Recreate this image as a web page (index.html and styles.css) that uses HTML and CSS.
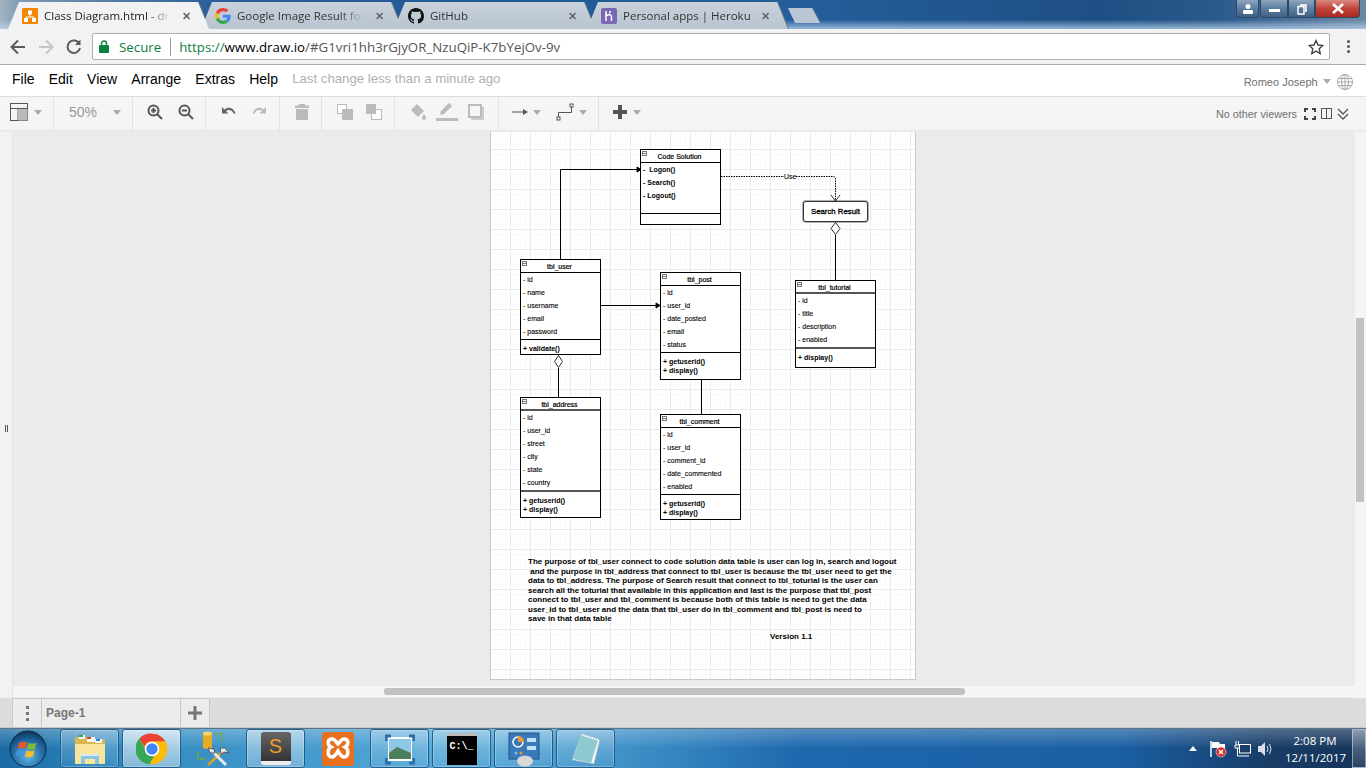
FILE: index.html
```html
<!DOCTYPE html>
<html lang="en">
<head>
    <meta charset="UTF-8">
    <title>Class Diagram.html - draw.io</title>
    <link rel="stylesheet" href="styles.css">
</head>
<body>
    <div class="titlebar">
        <div class="tabs">
            <div class="tab active">
                <svg class="favicon" viewBox="0 0 16 16"><rect width="16" height="16" rx="1" fill="#f08705"/><path d="M8 6v3M8 9H4v2M8 9h4v2" stroke="#fff" fill="none"/><rect x="6" y="2.500" width="4" height="4" fill="#fff"/><rect x="2" y="10" width="4" height="4" fill="#fff"/><rect x="10" y="10" width="4" height="4" fill="#fff"/></svg>
                <span class="tab-title fade">Class Diagram.html - dra</span>
                <span class="tab-close">✕</span>
            </div>
            <div class="tab">
                <svg class="favicon" viewBox="0 0 48 48"><path fill="#ea4335" d="M24 9.500c3.500 0 6.700 1.300 9.100 3.500l6.800-6.800C35.800 2.400 30.300 0 24 0 14.600 0 6.500 5.400 2.600 13.200l7.900 6.200C12.400 13.700 17.700 9.500 24 9.500z"/><path fill="#4285f4" d="M46.900 24.500c0-1.600-.1-3.100-.4-4.500H24v9h12.900c-.6 3-2.200 5.500-4.700 7.200l7.700 6c4.500-4.200 7-10.300 7-17.700z"/><path fill="#fbbc05" d="M10.500 28.600c-.5-1.400-.8-3-.8-4.600s.3-3.200.8-4.600l-7.900-6.200C.9 16.500 0 20.100 0 24s.9 7.500 2.600 10.800l7.900-6.200z"/><path fill="#34a853" d="M24 48c6.500 0 11.900-2.100 15.900-5.800l-7.700-6c-2.200 1.500-4.900 2.300-8.200 2.300-6.300 0-11.600-4.200-13.500-9.900l-7.900 6.200C6.500 42.600 14.600 48 24 48z"/></svg>
                <span class="tab-title fade">Google Image Result for</span>
                <span class="tab-close">✕</span>
            </div>
            <div class="tab">
                <svg class="favicon" viewBox="0 0 16 16"><path fill="#111" d="M8 0C3.580 0 0 3.580 0 8c0 3.540 2.290 6.530 5.470 7.590.4.070.55-.17.55-.38 0-.19-.01-.82-.01-1.490-2.010.37-2.530-.49-2.690-.94-.09-.23-.48-.94-.82-1.130-.28-.15-.68-.52-.01-.53.63-.01 1.080.58 1.230.82.72 1.210 1.870.87 2.330.66.070-.52.28-.87.51-1.070-1.780-.2-3.640-.89-3.640-3.950 0-.87.31-1.590.82-2.150-.08-.2-.36-1.020.08-2.120 0 0 .67-.21 2.200.82.64-.18 1.320-.27 2-.27.68 0 1.360.09 2 .27 1.530-1.040 2.200-.82 2.200-.82.44 1.100.16 1.920.08 2.120.51.56.82 1.270.82 2.150 0 3.070-1.870 3.750-3.650 3.950.29.25.54.73.54 1.480 0 1.070-.01 1.930-.01 2.200 0 .21.15.46.55.38A8.013 8.013 0 0016 8c0-4.420-3.580-8-8-8z"/></svg>
                <span class="tab-title">GitHub</span>
                <span class="tab-close">✕</span>
            </div>
            <div class="tab">
                <svg class="favicon" viewBox="0 0 16 16"><rect width="16" height="16" rx="2" fill="#7b68b3"/><path d="M5 3v10M5 7.500c3-1 5.500-1 5.500 1V13M9.500 3l-1 2.500M5.500 13" stroke="#fff" stroke-width="1.500" fill="none"/></svg>
                <span class="tab-title">Personal apps | Heroku</span>
                <span class="tab-close">✕</span>
            </div>
            <div class="newtab"></div>
        </div>
        <div class="winbtns">
            <span class="winbtn user"><svg width="12" height="12" viewBox="0 0 12 12"><circle cx="6" cy="3.500" r="2.500" fill="#fff"/><rect x="1" y="7" width="10" height="4" rx="1" fill="#fff"/></svg></span>
            <span class="winbtn min"><i class="min-bar"></i></span>
            <span class="winbtn max"><svg width="12" height="12" viewBox="0 0 12 12" fill="none" stroke="#fff" stroke-width="1.500"><rect x="2" y="3.500" width="6" height="7.500"/><path d="M4 2h6v7"/></svg></span>
            <span class="winbtn close"><svg width="14" height="11" viewBox="0 0 14 11" stroke="#fff" stroke-width="2.600"><path d="M2 1l10 9M12 1L2 10"/></svg></span>
        </div>
    </div>

    <div class="addressbar">
        <svg class="nav" width="18" height="18" viewBox="0 0 18 18" fill="none" stroke="#5a5a5a" stroke-width="2"><path d="M16 9H3M9 2.500L2.500 9 9 15.500"/></svg>
        <svg class="nav" width="18" height="18" viewBox="0 0 18 18" fill="none" stroke="#c4c4c4" stroke-width="2"><path d="M2 9h13M9 2.500L15.500 9 9 15.500"/></svg>
        <svg class="nav" width="18" height="18" viewBox="0 0 18 18" fill="none" stroke="#5a5a5a" stroke-width="2"><path d="M14.500 6A6.300 6.300 0 1 0 15 10"/><path d="M15.500 1.500V7h-5.500z" fill="#5a5a5a" stroke="none"/></svg>
        <div class="omnibox">
            <svg width="10" height="13" viewBox="0 0 10 13"><rect y="5" width="10" height="8" rx="1" fill="#0b8043"/><path d="M2.500 6V3.500a2.500 2.500 0 0 1 5 0V6" fill="none" stroke="#0b8043" stroke-width="1.400"/></svg>
            <span class="secure">Secure</span>
            <span class="url"><span class="url-green">https://</span><span class="url-host">www.draw.io</span>/#G1vri1hh3rGjyOR_NzuQiP-K7bYejOv-9v</span>
            <svg class="star" width="16" height="16" viewBox="0 0 16 16" fill="none" stroke="#444" stroke-width="1.400"><path d="M8 1.500l2 4.500 4.800.5-3.600 3.200 1 4.800L8 12.100l-4.200 2.400 1-4.800L1.200 6.500 6 6z"/></svg>
        </div>
        <div class="kebab"><i></i><i></i><i></i></div>
    </div>

    <div class="menubar">
        <span>File</span><span>Edit</span><span>View</span><span>Arrange</span><span>Extras</span><span>Help</span>
        <span class="status">Last change less than a minute ago</span>
        <span class="account">Romeo Joseph</span>
        <i class="caret account-caret"></i>
        <svg class="globe" width="18" height="18" viewBox="0 0 18 18" fill="none" stroke="#aaa"><circle cx="9" cy="9" r="7.500"/><ellipse cx="9" cy="9" rx="3.500" ry="7.500"/><path d="M9 1.500v15M1.500 9h15M2.500 5.500h13M2.500 12.500h13"/></svg>
    </div>

    <div class="toolbar">
        <div class="group g1">
            <svg width="18" height="18" viewBox="0 0 18 18" fill="none" stroke="#555"><rect x=".5" y=".5" width="17" height="17"/><path d="M.5 5.500h17M8 5.500v12"/><rect x="8" y="6" width="9.500" height="11.500" fill="#bbb" stroke="none"/></svg>
            <i class="caret"></i>
        </div>
        <div class="group g2"><span class="zoom-level">50%</span><i class="caret"></i></div>
        <div class="group g3">
            <svg width="18" height="18" viewBox="0 0 18 18" fill="none" stroke="#555" stroke-width="2"><circle cx="7.500" cy="7.500" r="5"/><path d="M11 11l5 5M5 7.500h5M7.500 5v5"/></svg>
            <svg width="18" height="18" viewBox="0 0 18 18" fill="none" stroke="#555" stroke-width="2"><circle cx="7.500" cy="7.500" r="5"/><path d="M11 11l5 5M5 7.500h5"/></svg>
        </div>
        <div class="group g4">
            <svg width="18" height="18" viewBox="0 0 18 18" fill="#666"><path d="M2 4v6.500h6.500L6 8c3-2 6-1 8 3l1.500-.7C13 4.500 8.500 3.500 4.500 6.500z"/></svg>
            <svg width="18" height="18" viewBox="0 0 18 18" fill="#bbb"><path d="M16 4v6.500H9.500L12 8c-3-2-6-1-8 3l-1.500-.7C5 4.500 9.500 3.500 13.500 6.500z"/></svg>
        </div>
        <div class="group g5">
            <svg width="18" height="18" viewBox="0 0 18 18" fill="#bbb"><path d="M6 1h6v1.500h4V5H2V2.500h4zM3 6h12v11H3z"/></svg>
        </div>
        <div class="group g6">
            <svg width="18" height="18" viewBox="0 0 18 18" fill="#fff" stroke="#bbb"><rect x="1.500" y="1.500" width="9" height="9"/><rect x="6.500" y="6.500" width="10" height="10" fill="#bbb"/></svg>
            <svg width="18" height="18" viewBox="0 0 18 18" fill="#fff" stroke="#bbb"><rect x="6.500" y="6.500" width="10" height="10"/><rect x="1.500" y="1.500" width="9" height="9" fill="#bbb"/></svg>
        </div>
        <div class="group g7">
            <svg width="18" height="18" viewBox="0 0 18 18" fill="#bbb"><path d="M8 1l7 7-6 6-7-7zM15 11c1.500 2 2 3 2 4a2 2 0 0 1-4 0c0-1 .5-2 2-4z"/></svg>
            <svg width="22" height="20" viewBox="0 0 22 20" fill="#bbb"><path d="M13 1l3 3-8 8-4 1 1-4zM0 16h22v3H0z"/></svg>
            <svg width="18" height="18" viewBox="0 0 18 18" fill="none"><path d="M4 4h13v13H4z" fill="#ccc"/><rect x="2" y="2" width="12" height="12" fill="#f5f5f5" stroke="#bbb" stroke-width="2"/></svg>
        </div>
        <div class="group g8">
            <svg width="16" height="10" viewBox="0 0 16 10" fill="#555"><path d="M0 4.500h12v1H0zM11 2l5 3-5 3z"/></svg>
            <i class="caret"></i>
            <svg class="waypoint" width="18" height="18" viewBox="0 0 18 18" fill="none" stroke="#555"><path d="M2.500 15V9.500h13V3"/><rect x="1" y="14" width="3" height="3" fill="#fff"/><rect x="14" y="1" width="3" height="3" fill="#fff"/></svg>
            <i class="caret"></i>
        </div>
        <div class="group g9">
            <svg width="14" height="14" viewBox="0 0 14 14" fill="#555"><path d="M5 0h4v5h5v4H9v5H5V9H0V5h5z"/></svg>
            <i class="caret"></i>
        </div>
        <div class="viewers">
            <span>No other viewers</span>
            <svg width="12" height="12" viewBox="0 0 12 12" fill="#444"><path d="M0 0h4v2H2v2H0zM8 0h4v4h-2V2H8zM12 8v4H8v-2h2V8zM4 12H0V8h2v2h2z"/></svg>
            <svg width="11" height="11" viewBox="0 0 11 11" fill="none" stroke="#555"><rect x=".5" y=".5" width="10" height="10"/><path d="M5.500 .5v10"/></svg>
            <svg width="12" height="12" viewBox="0 0 12 12" fill="none" stroke="#555" stroke-width="1.300"><path d="M1 1l5 5 5-5M1 6l5 5 5-5"/></svg>
        </div>
    </div>

    <div class="workspace">
        <div class="sidebar"><div class="grip"><i></i><i></i></div></div>
        <div class="page">
            <svg class="wires" width="424" height="549" viewBox="0 0 424 549" fill="none" stroke="#000">
                <path d="M69.500 129V39.500H146"/>
                <path d="M146 37l4 2.500-4 2.500z" fill="#000"/>
                <path d="M110 175.500h56"/>
                <path d="M165 173l4 2.500-4 2.500z" fill="#000"/>
                <path d="M230 46.500h112q2.500 0 2.500 2.500v21.500" stroke-dasharray="1.500 1"/>
                <path d="M340 65l4.500 6 4.500-6" stroke="#333"/>
                <path d="M344.500 105v45"/>
                <path d="M344.500 92.500l4.500 6-4.500 6-4.500-6z" fill="#fff" stroke="#333"/>
                <path d="M67.500 238v29"/>
                <path d="M67.500 225.500l4 6-4 6-4-6z" fill="#fff" stroke="#333"/>
                <path d="M210.500 250v34"/>
            </svg>

            <span class="edge-label">Use</span>

            <div class="node code-solution">
                <div class="node-head"><i class="toggle"></i>Code Solution</div>
                <div class="rows tall">
                    <div class="row">-&nbsp; Logon()</div>
                    <div class="row">- Search()</div>
                    <div class="row">- Logout()</div>
                </div>
                <div class="methods empty"></div>
            </div>

            <div class="search-result">Search Result</div>

            <div class="node tbl-user">
                <div class="node-head"><i class="toggle"></i>tbl_user</div>
                <div class="rows">
                    <div class="row">- id</div>
                    <div class="row">- name</div>
                    <div class="row">- username</div>
                    <div class="row">- email</div>
                    <div class="row">- password</div>
                </div>
                <div class="methods"><div>+ validate()</div></div>
            </div>

            <div class="node tbl-post">
                <div class="node-head"><i class="toggle"></i>tbl_post</div>
                <div class="rows">
                    <div class="row">- id</div>
                    <div class="row">- user_id</div>
                    <div class="row">- date_posted</div>
                    <div class="row">- email</div>
                    <div class="row">- status</div>
                </div>
                <div class="methods"><div>+ getuserid()</div><div>+ display()</div></div>
            </div>

            <div class="node tbl-tutorial">
                <div class="node-head"><i class="toggle"></i>tbl_tutorial</div>
                <div class="rows">
                    <div class="row">- id</div>
                    <div class="row">- title</div>
                    <div class="row">- description</div>
                    <div class="row">- enabled</div>
                </div>
                <div class="methods"><div>+ display()</div></div>
            </div>

            <div class="node tbl-address">
                <div class="node-head"><i class="toggle"></i>tbl_address</div>
                <div class="rows">
                    <div class="row">- id</div>
                    <div class="row">- user_id</div>
                    <div class="row">- street</div>
                    <div class="row">- city</div>
                    <div class="row">- state</div>
                    <div class="row">- country</div>
                </div>
                <div class="methods"><div>+ getuserid()</div><div>+ display()</div></div>
            </div>

            <div class="node tbl-comment">
                <div class="node-head"><i class="toggle"></i>tbl_comment</div>
                <div class="rows">
                    <div class="row">- id</div>
                    <div class="row">- user_id</div>
                    <div class="row">- comment_id</div>
                    <div class="row">- date_commented</div>
                    <div class="row">- enabled</div>
                </div>
                <div class="methods"><div>+ getuserid()</div><div>+ display()</div></div>
            </div>

            <div class="note">The purpose of tbl_user connect to code solution data table is user can log in, search and logout
 and the purpose in tbl_address that connect to tbl_user is because the tbl_user need to get the
data to tbl_address. The purpose of Search result that connect to tbl_toturial is the user can
search all the toturial that available in this application and last is the purpose that tbl_post
connect to tbl_user and tbl_comment is because both of this table is need to get the data
user_id to tbl_user and the data that tbl_user do in tbl_comment and tbl_post is need to
save in that data table</div>
            <div class="version">Version 1.1</div>
        </div>
        <div class="vscroll"><div class="vthumb"></div></div>
        <div class="hscroll"><div class="hthumb"></div></div>
    </div>

    <div class="pagetabs">
        <div class="pt-btn"><div class="kebab grey"><i></i><i></i><i></i></div></div>
        <div class="pt-page">Page-1</div>
        <div class="pt-btn"><svg width="14" height="14" viewBox="0 0 14 14" fill="#777"><path d="M5.500 0h3v5.500H14v3H8.500V14h-3V8.500H0v-3h5.500z"/></svg></div>
    </div>

    <div class="taskbar">
        <div class="start">
            <svg width="38" height="38" viewBox="0 0 38 38">
                <defs><radialGradient id="orb" cx=".5" cy=".7" r=".7"><stop offset="0" stop-color="#5fb7e8"/><stop offset=".7" stop-color="#1c5f96"/><stop offset="1" stop-color="#0d3357"/></radialGradient></defs>
                <circle cx="19" cy="19" r="18" fill="url(#orb)" stroke="#0b2c4a"/>
                <path d="M10 13q4-2 8-.5l-1.500 6q-4-1.500-8 .5z" fill="#e8562a"/>
                <path d="M19.500 13q4 1.500 8 0l-1.500 6q-4 1.500-8 0z" fill="#7fb93a"/>
                <path d="M8 20.500q4-2 8-.5l-1.500 6q-4-1.500-8 .5z" fill="#3b96dc"/>
                <path d="M17.500 20.500q4 1.500 8 0l-1.500 6q-4 1.500-8 0z" fill="#f5bb2a"/>
            </svg>
        </div>
        <div class="tasks">
            <div class="task framed">
                <svg width="32" height="32" viewBox="0 0 32 32"><path d="M1 6q0-2 2-2h10l2 2h14q2 0 2 2v4H1z" fill="#d9b94f"/><rect x="5" y="2" width="6" height="4" fill="#f5f5f5"/><rect x="5" y="2" width="4" height="2" fill="#3aa63a"/><rect x="13" y="4" width="8" height="5" fill="#f5f5f5"/><rect x="13" y="4" width="4" height="2" fill="#d8402f"/><rect x="21" y="6" width="7" height="4" fill="#f5f5f5"/><rect x="22" y="6" width="4" height="2" fill="#2e84d8"/><path d="M1 11h30v19q0 1-1 1H2q-1 0-1-1z" fill="#f8e59b"/><path d="M7 31V21h18v10h-4v-5H11v5z" fill="#8cc5e4"/><path d="M7 21h18v2H7z" fill="#d5ecf7"/></svg>
            </div>
            <div class="task framed lit">
                <svg width="32" height="32" viewBox="0 0 48 48"><circle cx="24" cy="24" r="23" fill="#fbbc05"/><path d="M24 1a23 23 0 0 1 20 11.500H24a11.500 11.500 0 0 0-11 8L5 8.500A23 23 0 0 1 24 1z" fill="#ea4335"/><path d="M5 8.500l10 17.500a11 11 0 0 0 12 9l-7 11.800A23 23 0 0 1 5 8.500z" fill="#34a853"/><circle cx="24" cy="24" r="11" fill="#fff"/><circle cx="24" cy="24" r="8.500" fill="#4285f4"/></svg>
            </div>
            <div class="task">
                <svg width="38" height="38" viewBox="0 0 38 38"><path d="M8 3h9v15q-4.500 2-9 0z" fill="#e6ac24"/><ellipse cx="12.500" cy="3.500" rx="4.500" ry="2" fill="#f5d76a"/><path d="M19 4h8v8M3 22v7h8" fill="none" stroke="#79a83a" stroke-width="2" stroke-dasharray="2 1"/><path d="M13 35l15-14" stroke="#d9a22a" stroke-width="2.500"/><path d="M31 35L17 21" stroke="#e8e8e8" stroke-width="3"/><path d="M13 18l6 1 1 4-5 0zM25 18h5l4 5-4-1-4 2z" fill="#dfe6ea" stroke="#556"/></svg>
            </div>
            <div class="task framed lit2">
                <div class="sublime"><span>S</span></div>
            </div>
            <div class="task">
                <svg width="32" height="34" viewBox="0 0 32 34"><rect width="32" height="34" rx="3" fill="#e8701f"/><path d="M10 7c-5 0-5 6-1 8-4 2-4 10 1 10 3 0 4-3 6-6 2 3 3 6 6 6 5 0 5-8 1-10 4-2 4-8-1-8-3 0-4 3-6 5-2-2-3-5-6-5z" fill="none" stroke="#fff" stroke-width="3.500"/></svg>
            </div>
            <div class="task framed">
                <svg width="30" height="32" viewBox="0 0 30 32"><rect x="3" y="4" width="24" height="24" fill="#fff"/><rect x="4" y="6" width="22" height="20" fill="#8fc7e8"/><path d="M4 20l8-6 14 6v6H4z" fill="#4c7f5c"/><path d="M1 8V3h5M24 3h5v5M29 25v5h-5M6 30H1v-5" fill="none" stroke="#2a6ea8" stroke-width="3"/></svg>
            </div>
            <div class="task framed">
                <div class="cmd"><span>C:\_</span></div>
            </div>
            <div class="task framed">
                <svg width="34" height="36" viewBox="0 0 34 36"><rect x="2" y="2" width="30" height="26" fill="#3a7ab8" stroke="#1f5488"/><circle cx="11" cy="11" r="5" fill="none" stroke="#fff" stroke-width="1.500"/><path d="M11 5a6 6 0 0 1 6 6h-6z" fill="#f09a28"/><rect x="20" y="7" width="9" height="4" fill="#bfe0f5"/><rect x="20" y="15" width="9" height="4" fill="#bfe0f5"/><circle cx="9" cy="22" r="1.500" fill="#7fc0e6"/><circle cx="14" cy="22" r="1.500" fill="#f09a28"/><ellipse cx="18" cy="30" rx="8" ry="5.500" fill="#d8d8d8"/></svg>
            </div>
            <div class="task framed">
                <svg width="34" height="36" viewBox="0 0 34 36"><path d="M12 3l19 6-6 24L3 29z" fill="#f2f6f7" stroke="#8fa5b0" stroke-width=".6"/><path d="M12 3l17 6-7 23-18-4z" fill="#8cc9d1"/><path d="M13 4l17 5" stroke="#fff" stroke-width="2" stroke-dasharray="1.500 1"/></svg>
            </div>
        </div>
        <div class="tray">
            <i class="tray-up"></i>
            <svg width="18" height="18" viewBox="0 0 18 18"><path d="M2 1v16" stroke="#fff" stroke-width="1.500"/><path d="M3 2h7l1 2h5v5H9L8 8H3z" fill="#fff"/><circle cx="12" cy="12" r="5" fill="#d8302a" stroke="#fff" stroke-width=".5"/><path d="M10 10l4 4M14 10l-4 4" stroke="#fff" stroke-width="1.400"/></svg>
            <svg width="18" height="18" viewBox="0 0 18 18" fill="none" stroke="#fff"><path d="M3 1v4M5.500 1v4M2 5h5v3H2zM4.500 8v8H9"/><rect x="6.500" y="4.500" width="11" height="8.500" fill="#1a3f68"/><path d="M9 16h7"/></svg>
            <svg width="18" height="18" viewBox="0 0 18 18"><path d="M1 6h3l4-4v14l-4-4H1z" fill="#dde"/><path d="M10 6q2 3 0 6M12.500 4q3 5 0 10" fill="none" stroke="#dde"/></svg>
            <div class="clock"><div>2:08 PM</div><div>12/11/2017</div></div>
            <div class="show-desktop"></div>
        </div>
    </div>
</body>
</html>
```

FILE: styles.css
```css
* {
    box-sizing: border-box;
}
html, body {
    margin: 0;
    height: 100%;
}
body {
    width: 1366px;
    height: 768px;
    overflow: hidden;
    display: flex;
    flex-direction: column;
    font-family: 'Liberation Sans', Arial, sans-serif;
    color: #000;
    background: #fff;
}
i {
    display: block;
}

/* window title + tabs */
.titlebar {
    height: 29px;
    flex: none;
    display: flex;
    justify-content: space-between;
    overflow: hidden;
    background:
        linear-gradient(to bottom, rgba(255,255,255,0) 68%, rgba(190,215,240,0.75) 100%),
        linear-gradient(to right, #a4b4c2 0, #7d9ab4 20px, #2a5f97 210px, #1f5a96 500px, #245e9b 800px, #1e4f84 1100px, #2a5a8c 1220px, #6d88a6 1366px);
}
.tabs {
    display: flex;
    padding: 2px 0 0 8px;
    filter: drop-shadow(1px 0 0 #64788c);
}
.tab {
    width: 201px;
    height: 27px;
    margin-right: -8px;
    padding: 0 14px 0 14px;
    display: flex;
    align-items: center;
    gap: 6px;
    font-family: 'Open Sans', sans-serif;
    font-size: 11.500px;
    color: #333;
    background: linear-gradient(to bottom, #c9d2db, #b8c4d0);
    clip-path: polygon(0 100%, 11px 0, calc(100% - 11px) 0, 100% 100%);
}
.tab.active {
    position: relative;
    z-index: 2;
    background: #f2f2f2;
    color: #222;
}
.favicon {
    width: 16px;
    height: 16px;
    flex: none;
}
.tab-title {
    flex: 1;
    min-width: 0;
    white-space: nowrap;
}
.fade {
    mask-image: linear-gradient(to right, #000 80%, transparent 98%);
}
.tab-close {
    flex: none;
    width: 14px;
    margin-right: 2px;
    font-size: 11px;
    font-weight: bold;
    color: #666;
    text-align: center;
}
.newtab {
    width: 32px;
    height: 15px;
    margin: 6px 0 0 8px;
    background: #b9c6d3;
    clip-path: polygon(0 0, 24px 0, 100% 100%, 7px 100%);
}
.winbtns {
    display: flex;
    margin: 0 6px 0 0;
    height: 18px;
}
.winbtn {
    display: flex;
    align-items: center;
    justify-content: center;
    border: 1px solid #2f4964;
    border-top: none;
    background: linear-gradient(to bottom, #8fa6bd, #5c7d9e 50%, #3f6084);
    height: 18px;
}
.user {
    width: 23px;
    margin-right: 1px;
    border-radius: 0 0 4px 4px;
}
.min {
    width: 28px;
    border-radius: 0 0 0 4px;
}
.min-bar {
    width: 11px;
    height: 3px;
    margin-top: 4px;
    background: #fff;
}
.max {
    width: 27px;
}
.close {
    width: 45px;
    border-radius: 0 0 4px 0;
    background: linear-gradient(to bottom, #d98b80, #c2433a 50%, #a52a22);
}

/* address bar */
.addressbar {
    height: 36px;
    flex: none;
    display: flex;
    align-items: center;
    gap: 10px;
    padding: 0 0 0 9px;
    background: #f2f2f2;
    border-bottom: 1px solid #a8a8a8;
}
.omnibox {
    width: 1238px;
    height: 27px;
    margin-left: -1px;
    display: flex;
    align-items: center;
    padding: 0 5px 0 6px;
    background: #fff;
    border: 1px solid #b0b0b0;
    border-radius: 2px;
    font-family: 'Open Sans', sans-serif;
    font-size: 13.300px;
}
.secure {
    margin-left: 10px;
    padding-right: 9px;
    margin-right: 8px;
    color: #0b8043;
    border-right: 1px solid #999;
    line-height: 18px;
}
.url {
    color: #555;
    flex: 1;
    white-space: nowrap;
}
.url-green {
    color: #0b8043;
}
.url-host {
    color: #000;
}
.kebab {
    display: flex;
    flex-direction: column;
    gap: 2px;
    margin-left: 7px;
}
.kebab i {
    width: 3px;
    height: 3px;
    border-radius: 50%;
    background: #555;
}
.kebab.grey {
    margin: 0;
    gap: 3px;
}
.kebab.grey i {
    border-radius: 0;
    background: #777;
}

/* draw.io menu */
.menubar {
    height: 32px;
    flex: none;
    display: flex;
    align-items: center;
    gap: 14.200px;
    padding: 0 12px 4px;
    font-size: 14px;
    background: #fff;
    border-bottom: 1px solid #ddd;
}
.status {
    font-size: 13.200px;
    color: #b0b0b0;
}
.account {
    margin-left: auto;
    margin-top: 6px;
    font-size: 11px;
    color: #707070;
}
.account-caret {
    margin: 6px -9px 0;
}
.globe {
    margin-top: 6px;
}
.caret {
    width: 0;
    height: 0;
    border: 4.500px solid transparent;
    border-top: 5px solid #aaa;
    border-bottom: none;
}

.toolbar {
    position: relative;
    z-index: 2;
    height: 33px;
    flex: none;
    display: flex;
    background: #f5f5f5;
    box-shadow: 0 1px 0 #e6e6e6, 0 2px 0 #ebebeb;
}
.group {
    height: 33px;
    display: flex;
    align-items: center;
    border-right: 1px solid #e2e2e2;
    padding-bottom: 3px;
    flex: none;
}
.g1 { width: 54px; padding-left: 10px; gap: 6px; }
.g2 { width: 79px; padding-left: 15px; gap: 16px; }
.g3 { width: 73px; padding-left: 13px; gap: 13px; }
.g4 { width: 74px; padding-left: 14px; gap: 12px; }
.g5 { width: 42px; padding-left: 13px; }
.g6 { width: 73px; padding-left: 14px; gap: 11px; }
.g7 { width: 104px; padding-left: 14px; gap: 9px; }
.g8 { width: 100px; padding-left: 13px; gap: 5px; }
.g9 { width: 60px; padding-left: 14px; gap: 6px; border-right: none; }
.waypoint {
    margin-left: 10px;
}
.zoom-level {
    font-size: 14px;
    color: #999;
}
.viewers {
    margin-left: auto;
    display: flex;
    align-items: center;
    gap: 5px;
    padding-right: 17px;
    font-size: 10.800px;
    color: #707070;
}
.viewers span {
    margin-right: 2px;
}

/* canvas */
.workspace {
    flex: 1;
    position: relative;
    padding-left: 491px;
    background: #ebebeb;
    overflow: hidden;
}
.sidebar {
    position: absolute;
    left: 0;
    top: 0;
    bottom: 0;
    width: 13px;
    display: flex;
    align-items: center;
    justify-content: center;
    padding-top: 30px;
    background: #f2f2f2;
    border-right: 1px solid #e4e4e4;
}
.grip {
    display: flex;
    gap: 1px;
    margin-bottom: 2px;
}
.grip i {
    width: 1px;
    height: 7px;
    background: #555;
}
.page {
    position: relative;
    width: 424px;
    height: 549px;
    background-color: #fff;
    background-image:
        linear-gradient(to right, #ebebeb 1px, transparent 1px),
        linear-gradient(to bottom, #ebebeb 1px, transparent 1px),
        linear-gradient(to right, #fbfbfb 1px, transparent 1px),
        linear-gradient(to bottom, #fbfbfb 1px, transparent 1px);
    background-size: 20px 20px, 20px 20px, 5px 5px, 5px 5px;
    background-position: 19px -1px, 19px -1px, 4px -1px, 4px -1px;
    box-shadow: 0 0 0 1px #c8c8c8;
}
.wires {
    position: absolute;
    left: 0;
    top: 0;
}
.node {
    position: absolute;
    width: 81px;
    border: 1px solid #000;
    background: #fff;
    display: flex;
    flex-direction: column;
    font-size: 7px;
    -webkit-text-stroke: 0.1px #000;
}
.node-head {
    position: relative;
    height: 13px;
    line-height: 13px;
    text-align: center;
    border-bottom: 1px solid #000;
    flex: none;
    padding-right: 2px;
    -webkit-text-stroke: 0.2px #000;
}
.toggle {
    position: absolute;
    left: 1px;
    top: 1px;
    width: 5px;
    height: 5px;
    border: 1px solid #777;
    background: linear-gradient(#777, #777) center / 3px 1px no-repeat;
}
.rows {
    padding: 0 0 1px 2px;
    border-bottom: 1px solid #000;
}
.row {
    height: 13px;
    line-height: 13px;
}
.tall {
    font-weight: bold;
    -webkit-text-stroke: 0;
}
.tall .row:last-child {
    margin-bottom: 10px;
}
.methods {
    flex: 1;
    padding: 4px 0 0 2px;
    line-height: 9px;
    font-weight: bold;
    -webkit-text-stroke: 0;
}
.code-solution { left: 149px; top: 19px; height: 76px; }
.tbl-user { left: 29px; top: 129px; height: 96px; }
.tbl-post { left: 169px; top: 142px; height: 108px; }
.tbl-tutorial { left: 304px; top: 150px; height: 88px; }
.tbl-address { left: 29px; top: 267px; height: 121px; }
.tbl-comment { left: 169px; top: 284px; height: 106px; }
.tbl-tutorial .node-head,
.tbl-tutorial .rows,
.tbl-address .node-head,
.tbl-address .rows {
    border-bottom-color: #555;
    border-bottom-width: 2px;
}
.search-result {
    position: absolute;
    left: 312px;
    top: 71px;
    width: 65px;
    height: 21px;
    line-height: 19px;
    text-align: center;
    font-size: 7.800px;
    -webkit-text-stroke: 0.3px #000;
    background: #fff;
    border: 1px solid #333;
    border-radius: 3px;
    box-shadow: 0 0 0 1px rgba(0,0,0,0.3);
}
.edge-label {
    position: absolute;
    left: 293px;
    top: 43px;
    font-size: 7px;
    line-height: 8px;
    background: #fff;
    -webkit-text-stroke: 0.1px #000;
}
.note {
    position: absolute;
    left: 37px;
    top: 427px;
    white-space: pre;
    font-size: 8px;
    font-weight: bold;
    line-height: 9.500px;
}
.version {
    position: absolute;
    left: 279px;
    top: 502px;
    font-size: 8px;
    font-weight: bold;
    line-height: 10px;
}
.vscroll {
    position: absolute;
    right: 0;
    top: 0;
    bottom: 0;
    width: 11px;
    background: #f5f5f5;
}
.vthumb {
    width: 8px;
    height: 184px;
    margin: 188px 0 0 1px;
    background: #c1c1c1;
}
.hscroll {
    position: absolute;
    left: 13px;
    right: 11px;
    bottom: 1px;
    height: 11px;
    padding-top: 2px;
    background: #f5f5f5;
}
.hthumb {
    width: 581px;
    height: 7px;
    margin-left: 371px;
    border-radius: 3px;
    background: #c1c1c1;
}

/* page tabs */
.pagetabs {
    height: 30px;
    flex: none;
    display: flex;
    padding-left: 12px;
    background: #dcdcdc;
    border-bottom: 1px solid #c8c8c8;
}
.pt-btn {
    width: 30px;
    display: flex;
    align-items: center;
    justify-content: center;
    background: #ececec;
    border: 1px solid #c8c8c8;
    border-bottom: none;
}
.pt-page {
    width: 138px;
    padding-left: 4px;
    line-height: 29px;
    font-size: 12px;
    font-weight: bold;
    color: #777;
    background: #ececec;
    border-top: 1px solid #c8c8c8;
}

/* windows taskbar */
.taskbar {
    height: 40px;
    flex: none;
    display: flex;
    color: #fff;
    background:
        linear-gradient(to bottom, rgba(255,255,255,0.25), rgba(255,255,255,0) 50%),
        linear-gradient(to right, #1a6aa3 0, #2d86bd 100px, #55a9d8 450px, #3f92c8 620px, #1e68ad 800px, #1a5fa4 1120px, #173c66 1270px, #16345a 1366px);
    border-top: 1px solid #5d7487;
}
.start {
    width: 60px;
    flex: none;
    padding-left: 9px;
    display: flex;
    align-items: center;
}
.tasks {
    display: flex;
    gap: 3px;
}
.task {
    width: 59px;
    height: 39px;
    display: flex;
    align-items: center;
    justify-content: center;
}
.task.framed {
    border: 1px solid #1f5e8c;
    border-radius: 3px;
    background: linear-gradient(to bottom, rgba(255,255,255,0.28), rgba(255,255,255,0.05));
    box-shadow: inset 0 0 0 1px rgba(255,255,255,0.25);
}
.task.lit {
    background: linear-gradient(to bottom, rgba(255,255,255,0.7), rgba(255,255,255,0.4));
}
.task.lit2 {
    background: linear-gradient(to bottom, rgba(255,255,255,0.5), rgba(255,255,255,0.25));
}
.sublime {
    width: 30px;
    height: 33px;
    display: flex;
    align-items: center;
    justify-content: center;
    border-radius: 3px;
    border-bottom: 4px solid #eee;
    background: linear-gradient(#666, #333);
    color: #f09a28;
    font-size: 20px;
}
.cmd {
    width: 30px;
    height: 32px;
    padding: 5px 0 0 3px;
    background: #000;
    border-top: 3px solid #bbb;
    font-family: 'Liberation Mono', monospace;
    font-size: 10px;
    font-weight: bold;
    line-height: 12px;
}
.tray {
    margin-left: auto;
    display: flex;
    align-items: center;
    gap: 6px;
}
.tray-up {
    width: 0;
    height: 0;
    margin-right: 6px;
    border: 4px solid transparent;
    border-bottom: 5px solid #fff;
    border-top: none;
}
.clock {
    width: 60px;
    margin: 0 1px 0 4px;
    text-align: center;
    font-family: 'Open Sans', sans-serif;
    font-size: 11.500px;
    line-height: 17px;
}
.show-desktop {
    width: 14px;
    height: 39px;
    background: linear-gradient(to bottom, rgba(255,255,255,0.35), rgba(255,255,255,0.08));
    border: 1px solid rgba(255,255,255,0.45);
}
```
